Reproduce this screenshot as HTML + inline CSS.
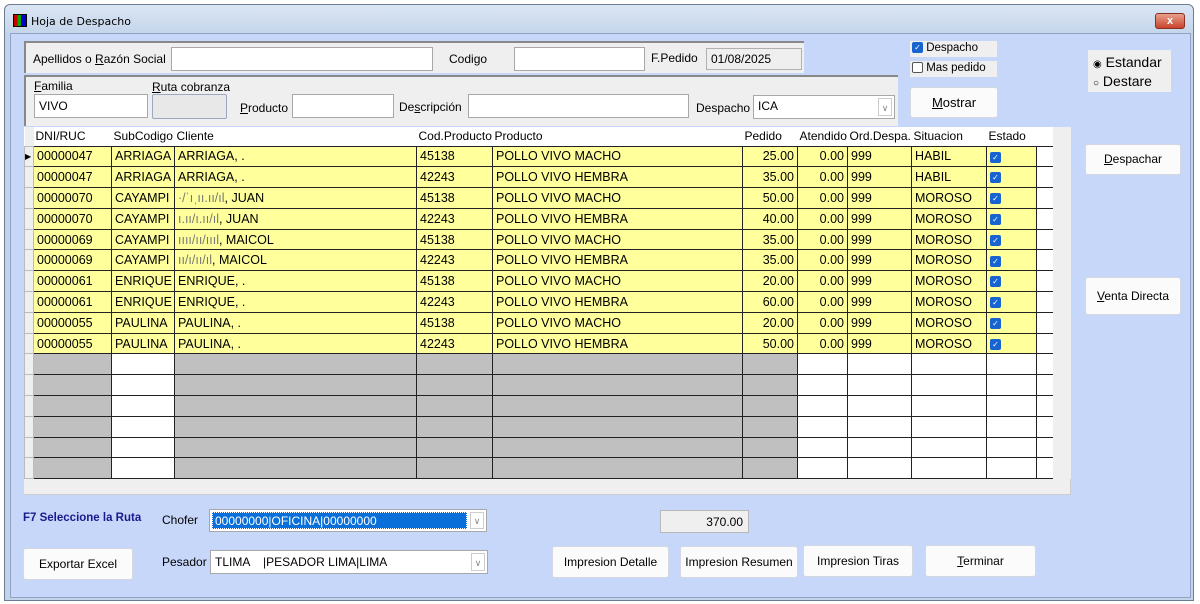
<!DOCTYPE html>
<html><head><meta charset="utf-8"><style>
*{box-sizing:border-box;margin:0;padding:0}
body{width:1200px;height:604px;background:#fff;font-family:"Liberation Sans",sans-serif;font-size:12px;color:#000;position:relative;overflow:hidden}
.a{position:absolute}
.win{left:4px;top:4px;width:1190px;height:597px;border:1px solid #6a7d94;border-radius:6px 6px 0 0;background:linear-gradient(#dbe6f4,#c3d4ea 30px);}
.body{left:10px;top:33px;width:1181px;height:565px;background:#c7d7fa;border:1px solid #8ea4c4}
.box{background:#fff;border:1px solid #a8a8a8}
.btn{background:#fbfbfb;border:1px solid #d4d8e0;border-radius:3px;text-align:center;font-size:12px}
.pan{background:#efefef}
table{border-collapse:collapse;table-layout:fixed}
td{border:1px solid #222;height:20.8px;padding:0 3px;font-size:12.5px;white-space:nowrap;overflow:hidden}
tr.y td{background:#ffff9c}
tr.e td{background:#c0c0c0}
tr.e td.w,td.x{background:#fff!important}
td.r{text-align:right}
td.ind{background:#efefef!important;border-color:#bbb;padding:0}
.chk{display:inline-block;width:11px;height:11px;background:#1764d0;border-radius:2px;color:#fff;font-size:8px;line-height:11px;text-align:center;vertical-align:middle}
th{font-weight:normal;text-align:left;font-size:12px;height:19px;padding:0 2px;background:#fff;white-space:nowrap;overflow:hidden}
u{text-decoration:underline}
</style></head><body>
<div class="a win"></div>
<div class="a" style="left:13px;top:14px;width:14px;height:13px;background:linear-gradient(90deg,#c00 0 30%,#0a0 30% 60%,#00c 60%);border:1px solid #000"></div>
<div class="a" style="left:31px;top:15px;font-family:'DejaVu Sans',sans-serif;font-size:11px">Hoja de Despacho</div>
<div class="a" style="left:1155px;top:13px;width:30px;height:16px;background:linear-gradient(#e8a08c,#c8442c);border:1px solid #8a3020;border-radius:3px;color:#fff;text-align:center;font-size:11px;font-weight:bold;line-height:14px">x</div>
<div class="a body"></div>

<div class="a pan" style="left:24px;top:41px;width:780px;height:32px;border-top:2px solid #888;border-left:2px solid #888"></div>
<div class="a" style="left:33px;top:52px">Apellidos o <u>R</u>azón Social</div>
<div class="a box" style="left:171px;top:47px;width:262px;height:24px"></div>
<div class="a" style="left:449px;top:52px">Codi<u>g</u>o</div>
<div class="a box" style="left:514px;top:47px;width:131px;height:24px"></div>
<div class="a" style="left:651px;top:51px">F.Pedido</div>
<div class="a" style="left:706px;top:48px;width:96px;height:22px;background:#efefef;border:1px solid #b0b0b0;padding:3px 4px">01/08/2025</div>

<div class="a pan" style="left:24px;top:75px;width:874px;height:51px;border-top:2px solid #888;border-left:2px solid #888"></div>
<div class="a" style="left:34px;top:79px"><u>F</u>amilia</div>
<div class="a box" style="left:34px;top:94px;width:114px;height:24px;padding:4px 4px">VIVO</div>
<div class="a" style="left:152px;top:80px"><u>R</u>uta cobranza</div>
<div class="a" style="left:152px;top:94px;width:75px;height:25px;background:#e8e8e8;border:1px solid #9aa8c0;border-radius:2px"></div>
<div class="a" style="left:240px;top:101px"><u>P</u>roducto</div>
<div class="a box" style="left:292px;top:94px;width:102px;height:24px"></div>
<div class="a" style="left:399px;top:100px">De<u>s</u>cripción</div>
<div class="a box" style="left:468px;top:94px;width:221px;height:24px"></div>
<div class="a" style="left:696px;top:101px">Despacho</div>
<div class="a box" style="left:753px;top:95px;width:142px;height:24px;padding:3px 4px">ICA<span class="a" style="right:2px;top:2px;width:14px;height:18px;border:1px solid #ccc;color:#888;font-size:9px;text-align:center;line-height:18px">∨</span></div>

<div class="a" style="left:910px;top:41px;width:87px;height:16px;background:#efefef;padding:1px 2px;font-size:11.5px"><span class="chk">✓</span> Despacho</div>
<div class="a" style="left:910px;top:61px;width:87px;height:16px;background:#efefef;padding:1px 2px;font-size:11.5px"><span style="display:inline-block;width:11px;height:11px;border:1px solid #555;border-radius:2px;vertical-align:middle;background:#fff"></span> Mas pedido</div>
<div class="a btn" style="left:910px;top:87px;width:88px;height:31px;line-height:29px;font-size:13px"><u>M</u>ostrar</div>
<div class="a" style="left:1088px;top:50px;width:83px;height:42px;background:#efefef;font-size:14px;padding:4px 5px;line-height:17px;white-space:nowrap"><span style="font-size:10px">◉</span> Estandar<br><span style="font-size:10px">○</span> Destare</div>
<div class="a btn" style="left:1085px;top:144px;width:96px;height:31px;line-height:29px"><u>D</u>espachar</div>
<div class="a btn" style="left:1085px;top:277px;width:96px;height:38px;line-height:36px"><u>V</u>enta Directa</div>

<div class="a" style="left:24px;top:127px;width:1047px;height:368px;background:#efefef;border:1px solid #ccc"></div>
<div class="a" style="left:24px;top:127px;width:1029px;height:352px;background:#fff"></div>
<table class="a" style="left:24px;top:127px;width:1030px">
<colgroup><col style="width:9px"><col style="width:78px"><col style="width:63px"><col style="width:242px"><col style="width:76px"><col style="width:250px"><col style="width:55px"><col style="width:50px"><col style="width:64px"><col style="width:75px"><col style="width:50px"><col style="width:18px"></colgroup>
<tr><th style="background:#efefef"></th><th>DNI/RUC</th><th>SubCodigo</th><th>Cliente</th><th>Cod.Producto</th><th>Producto</th><th>Pedido</th><th>Atendido</th><th>Ord.Despa.</th><th>Situacion</th><th>Estado</th><th></th></tr>
<tr class="y"><td class="ind" style="font-size:8px">▶</td><td>00000047</td><td>ARRIAGA</td><td>ARRIAGA, .</td><td>45138</td><td>POLLO VIVO MACHO</td><td class="r">25.00</td><td class="r">0.00</td><td>999</td><td>HABIL</td><td><span class="chk">✓</span></td><td class="x"></td></tr>
<tr class="y"><td class="ind"></td><td>00000047</td><td>ARRIAGA</td><td>ARRIAGA, .</td><td>42243</td><td>POLLO VIVO HEMBRA</td><td class="r">35.00</td><td class="r">0.00</td><td>999</td><td>HABIL</td><td><span class="chk">✓</span></td><td class="x"></td></tr>
<tr class="y"><td class="ind"></td><td>00000070</td><td>CAYAMPI</td><td><span style="color:#777">·/ˈıˌıı.ıı/ıl</span>, JUAN</td><td>45138</td><td>POLLO VIVO MACHO</td><td class="r">50.00</td><td class="r">0.00</td><td>999</td><td>MOROSO</td><td><span class="chk">✓</span></td><td class="x"></td></tr>
<tr class="y"><td class="ind"></td><td>00000070</td><td>CAYAMPI</td><td><span style="color:#777">ı.ıı/ı.ıı/ıl</span>, JUAN</td><td>42243</td><td>POLLO VIVO HEMBRA</td><td class="r">40.00</td><td class="r">0.00</td><td>999</td><td>MOROSO</td><td><span class="chk">✓</span></td><td class="x"></td></tr>
<tr class="y"><td class="ind"></td><td>00000069</td><td>CAYAMPI</td><td><span style="color:#777">ıııı/ıı/ıııl</span>, MAICOL</td><td>45138</td><td>POLLO VIVO MACHO</td><td class="r">35.00</td><td class="r">0.00</td><td>999</td><td>MOROSO</td><td><span class="chk">✓</span></td><td class="x"></td></tr>
<tr class="y"><td class="ind"></td><td>00000069</td><td>CAYAMPI</td><td><span style="color:#777">ıı/ı/ıı/ıl</span>, MAICOL</td><td>42243</td><td>POLLO VIVO HEMBRA</td><td class="r">35.00</td><td class="r">0.00</td><td>999</td><td>MOROSO</td><td><span class="chk">✓</span></td><td class="x"></td></tr>
<tr class="y"><td class="ind"></td><td>00000061</td><td>ENRIQUE</td><td>ENRIQUE, .</td><td>45138</td><td>POLLO VIVO MACHO</td><td class="r">20.00</td><td class="r">0.00</td><td>999</td><td>MOROSO</td><td><span class="chk">✓</span></td><td class="x"></td></tr>
<tr class="y"><td class="ind"></td><td>00000061</td><td>ENRIQUE</td><td>ENRIQUE, .</td><td>42243</td><td>POLLO VIVO HEMBRA</td><td class="r">60.00</td><td class="r">0.00</td><td>999</td><td>MOROSO</td><td><span class="chk">✓</span></td><td class="x"></td></tr>
<tr class="y"><td class="ind"></td><td>00000055</td><td>PAULINA</td><td>PAULINA, .</td><td>45138</td><td>POLLO VIVO MACHO</td><td class="r">20.00</td><td class="r">0.00</td><td>999</td><td>MOROSO</td><td><span class="chk">✓</span></td><td class="x"></td></tr>
<tr class="y"><td class="ind"></td><td>00000055</td><td>PAULINA</td><td>PAULINA, .</td><td>42243</td><td>POLLO VIVO HEMBRA</td><td class="r">50.00</td><td class="r">0.00</td><td>999</td><td>MOROSO</td><td><span class="chk">✓</span></td><td class="x"></td></tr>
<tr class="e"><td class="ind"></td><td></td><td class="w"></td><td></td><td></td><td></td><td></td><td class="w"></td><td class="w"></td><td class="w"></td><td class="w"></td><td class="w"></td></tr>
<tr class="e"><td class="ind"></td><td></td><td class="w"></td><td></td><td></td><td></td><td></td><td class="w"></td><td class="w"></td><td class="w"></td><td class="w"></td><td class="w"></td></tr>
<tr class="e"><td class="ind"></td><td></td><td class="w"></td><td></td><td></td><td></td><td></td><td class="w"></td><td class="w"></td><td class="w"></td><td class="w"></td><td class="w"></td></tr>
<tr class="e"><td class="ind"></td><td></td><td class="w"></td><td></td><td></td><td></td><td></td><td class="w"></td><td class="w"></td><td class="w"></td><td class="w"></td><td class="w"></td></tr>
<tr class="e"><td class="ind"></td><td></td><td class="w"></td><td></td><td></td><td></td><td></td><td class="w"></td><td class="w"></td><td class="w"></td><td class="w"></td><td class="w"></td></tr>
<tr class="e"><td class="ind"></td><td></td><td class="w"></td><td></td><td></td><td></td><td></td><td class="w"></td><td class="w"></td><td class="w"></td><td class="w"></td><td class="w"></td></tr>
</table>
<div class="a" style="left:1053px;top:127px;width:18px;height:352px;background:#efefef"></div>
<div class="a" style="left:24px;top:479px;width:1030px;height:15px;background:#efefef"></div>

<div class="a" style="left:23px;top:512px;color:#1a1a8c;font-weight:bold;font-size:11.5px">F7 Seleccione la Ruta</div>
<div class="a" style="left:162px;top:513px;font-size:12px">Chofer</div>
<div class="a box" style="left:209px;top:509px;width:278px;height:23px;padding:2px"><div style="background:#0a6fd8;color:#fff;height:17px;width:255px;padding:1px 2px;border:1px dotted #fff">00000000|OFICINA|00000000</div><span class="a" style="right:2px;top:2px;width:14px;height:17px;border:1px solid #ccc;color:#888;font-size:9px;text-align:center;line-height:17px">∨</span></div>
<div class="a" style="left:660px;top:510px;width:89px;height:23px;background:#efefef;border:1px solid #b8b8b8;text-align:right;padding:4px 5px">370.00</div>
<div class="a btn" style="left:23px;top:548px;width:110px;height:32px;line-height:30px">Exportar Excel</div>
<div class="a" style="left:162px;top:555px">Pesador</div>
<div class="a box" style="left:210px;top:550px;width:278px;height:24px;padding:4px 4px">TLIMA &nbsp;&nbsp;&nbsp;|PESADOR LIMA|LIMA<span class="a" style="right:2px;top:2px;width:14px;height:18px;border:1px solid #ccc;color:#888;font-size:9px;text-align:center;line-height:18px">∨</span></div>
<div class="a btn" style="left:552px;top:546px;width:117px;height:32px;line-height:30px">Impresion Detalle</div>
<div class="a btn" style="left:680px;top:546px;width:118px;height:32px;line-height:30px">Impresion Resumen</div>
<div class="a btn" style="left:803px;top:545px;width:110px;height:32px;line-height:30px">Impresion Tiras</div>
<div class="a btn" style="left:925px;top:545px;width:111px;height:32px;line-height:30px"><u>T</u>erminar</div>
</body></html>
